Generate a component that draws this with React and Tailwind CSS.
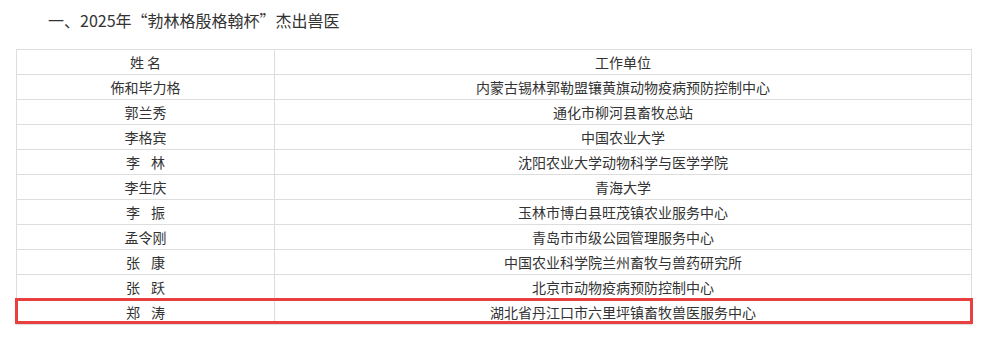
import React from "react";

const Sp = () => <span className="inline-block w-[11px]" />;

const rows = [
  [["佈和毕力格"], "内蒙古锡林郭勒盟镶黄旗动物疫病预防控制中心"],
  [["郭兰秀"], "通化市柳河县畜牧总站"],
  [["李格宾"], "中国农业大学"],
  [["李", "林"], "沈阳农业大学动物科学与医学学院"],
  [["李生庆"], "青海大学"],
  [["李", "振"], "玉林市博白县旺茂镇农业服务中心"],
  [["孟令刚"], "青岛市市级公园管理服务中心"],
  [["张", "康"], "中国农业科学院兰州畜牧与兽药研究所"],
  [["张", "跃"], "北京市动物疫病预防控制中心"],
  [["郑", "涛"], "湖北省丹江口市六里坪镇畜牧兽医服务中心"],
];

function Row({ name, unit, highlight }) {
  return (
    <div className="relative flex h-[25px] border-b border-[#dddddd]">
      <div className="w-[258px] shrink-0 border-r border-[#dddddd] flex items-center justify-center">
        {name}
      </div>
      <div className="flex-1 flex items-center justify-center">{unit}</div>
      {highlight && (
        <div className="absolute -left-[2px] -right-[2px] -top-[2px] bottom-0 border-[3px] border-[#e8403f]" />
      )}
    </div>
  );
}

export default function App() {
  return (
    <div
      className="w-[986px] h-[340px] bg-white text-[#333333] pt-[8px]"
      style={{ fontFamily: '"Noto Sans CJK SC", "Noto Sans", sans-serif' }}
    >
      <div className="pl-[48px] text-[16px] leading-[24px]">
        一、2025年“勃林格殷格翰杯”杰出兽医
      </div>
      <div className="ml-[16px] mt-[17px] w-[956px] border-l border-r border-t border-[#dddddd] text-[14px] leading-[20px]">
        <Row name={<span>姓 名</span>} unit="工作单位" />
        {rows.map((r, i) => (
          <Row
            key={i}
            name={
              r[0].length === 2 ? (
                <span>
                  {r[0][0]}
                  <Sp />
                  {r[0][1]}
                </span>
              ) : (
                <span>{r[0][0]}</span>
              )
            }
            unit={r[1]}
            highlight={i === rows.length - 1}
          />
        ))}
      </div>
    </div>
  );
}
